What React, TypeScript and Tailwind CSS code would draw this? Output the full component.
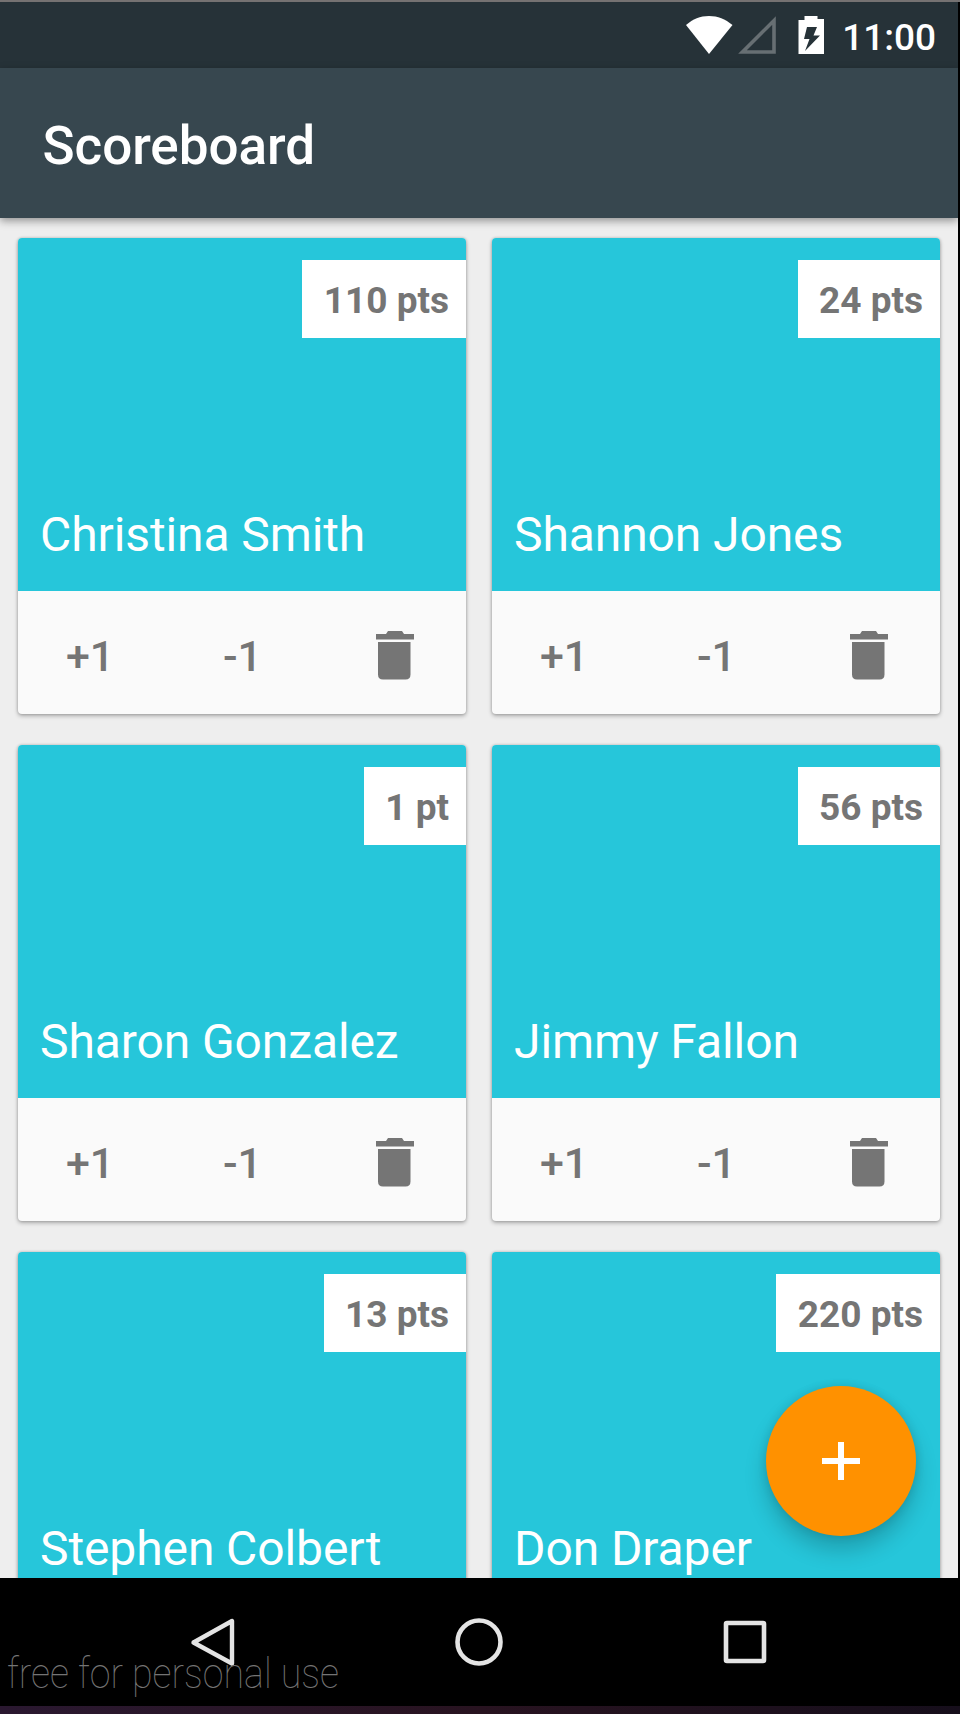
type Player = { name: string; points: string };

const players: Player[] = [
  { name: "Christina Smith", points: "110 pts" },
  { name: "Shannon Jones", points: "24 pts" },
  { name: "Sharon Gonzalez", points: "1 pt" },
  { name: "Jimmy Fallon", points: "56 pts" },
  { name: "Stephen Colbert", points: "13 pts" },
  { name: "Don Draper", points: "220 pts" },
];

function StatusBar() {
  return (
    <div className="flex h-[66px] shrink-0 items-start justify-end bg-[#263238] pr-[22px] text-white">
      <svg className="mt-[14px] h-[38px] w-[48px]" viewBox="0 0 48 38" fill="currentColor">
        <path d="M23 38 L0 9 C7 3 14 0 23 0 C32 0 39 3 46.5 9 Z" />
      </svg>
      <svg className="ml-[4px] mt-[14px] h-[38px] w-[38px]" viewBox="0 0 38 38" fill="none">
        <path d="M4.5 36 H36 V4.5 Z" stroke="#676f73" strokeWidth="3.6" />
      </svg>
      <svg className="ml-[22px] mt-[13px] h-[39px] w-[26px]" viewBox="0 0 26 39" fill="currentColor">
        <path
          fillRule="evenodd"
          d="M6.5 1 H19.5 V4 H26 V39 H0.5 V5 H6.5 Z M9 12 L6 24 H11.5 L7 36 L22 20.5 H15.5 L19 12 Z"
        />
      </svg>
      <span className="ml-[18px] mt-[14px] text-[37px] font-medium leading-[44px]">11:00</span>
    </div>
  );
}

function PlayerCard({ name, points }: Player) {
  return (
    <article className="flex h-[476px] flex-col overflow-hidden rounded-[4px] bg-[#fafafa] shadow-[0_2px_4px_rgba(0,0,0,0.28),0_0_3px_rgba(0,0,0,0.2)]">
      <div className="flex h-[353px] flex-col items-end justify-between bg-[#26c6da] pt-[22px]">
        <span className="h-[78px] bg-white pl-[21.5px] pr-[17px] text-[37px] font-bold leading-[82px] text-[#757575]">
          {points}
        </span>
        <h2 className="mb-[28px] w-full pl-[22px] text-[48px] leading-[56px] tracking-[-0.1px] text-white">
          {name}
        </h2>
      </div>
      <div className="flex h-[123px] items-center pl-[48px] text-[43px] font-medium text-[#757575]">
        <button className="w-[157px] pt-[6px] text-left leading-[50px]">+1</button>
        <button className="w-[153px] pt-[6px] text-left leading-[50px]">-1</button>
        <button aria-label="Delete" className="pt-[4px]">
          <svg className="h-[50px] w-[38px]" viewBox="0 0 38 50" fill="currentColor">
            <path d="M0 4 H10 L12 1 H26 L28 4 H38 V9.5 H0 Z M2 12 H34.5 V44.5 Q34.5 49.5 29.5 49.5 H7 Q2 49.5 2 44.5 Z" />
          </svg>
        </button>
      </div>
    </article>
  );
}

function NavigationBar() {
  return (
    <nav className="relative flex h-[128px] shrink-0 items-center bg-black pl-[190px] text-[#e4e4e4]">
      <svg className="h-[50px] w-[46px]" viewBox="0 0 46 50" fill="none">
        <path d="M3.5 25.5 L42 4 V46.5 Z" stroke="currentColor" strokeWidth="4.4" strokeLinejoin="round" />
      </svg>
      <svg className="ml-[218px] h-[50px] w-[50px]" viewBox="0 0 50 50" fill="none">
        <circle cx="25" cy="25" r="21.5" stroke="currentColor" strokeWidth="4.6" />
      </svg>
      <svg className="ml-[216px] h-[50px] w-[50px]" viewBox="0 0 50 50" fill="none">
        <rect x="6" y="6" width="38" height="38" rx="1" stroke="currentColor" strokeWidth="4.6" />
      </svg>
      <span className="absolute left-[7px] top-[71px] origin-left scale-x-[0.895] whitespace-nowrap text-[42px] font-thin leading-[50px] text-[#747474]">
        free for personal use
      </span>
    </nav>
  );
}

export default function App() {
  return (
    <div className="flex h-[1714px] w-[960px] flex-col overflow-hidden border-t-2 border-[#757272] bg-black font-['Roboto',sans-serif]">
      <div className="relative flex h-[1576px] w-[958px] shrink-0 flex-col overflow-hidden bg-[#eeeeee]">
        <StatusBar />
        <header className="relative flex h-[150px] shrink-0 items-center bg-[#37474f] pl-[42.5px] pt-[6px] shadow-[0_3px_8px_rgba(0,0,0,0.38)]">
          <h1 className="text-[53px] font-medium leading-[62px] tracking-[-0.05px] text-white">Scoreboard</h1>
        </header>
        <main className="grid grid-cols-[448px_448px] gap-x-[26px] gap-y-[31px] pl-[18px] pt-[20px]">
          {players.map((player) => (
            <PlayerCard key={player.name} {...player} />
          ))}
        </main>
        <button
          aria-label="Add player"
          className="absolute left-[766px] top-[1384px] flex size-[150px] items-center justify-center rounded-full bg-[#ff9100] text-white shadow-[0_14px_22px_rgba(0,0,0,0.2),0_0_10px_rgba(0,0,0,0.12)]"
        >
          <svg className="size-[38px]" viewBox="0 0 38 38" fill="currentColor">
            <path d="M16 0 H22 V16 H38 V22 H22 V38 H16 V22 H0 V16 H16 Z" />
          </svg>
        </button>
      </div>
      <NavigationBar />
      <div className="h-[8px] shrink-0 bg-linear-to-r from-[#2a1830] via-[#281320] to-[#160e1b]" />
    </div>
  );
}
